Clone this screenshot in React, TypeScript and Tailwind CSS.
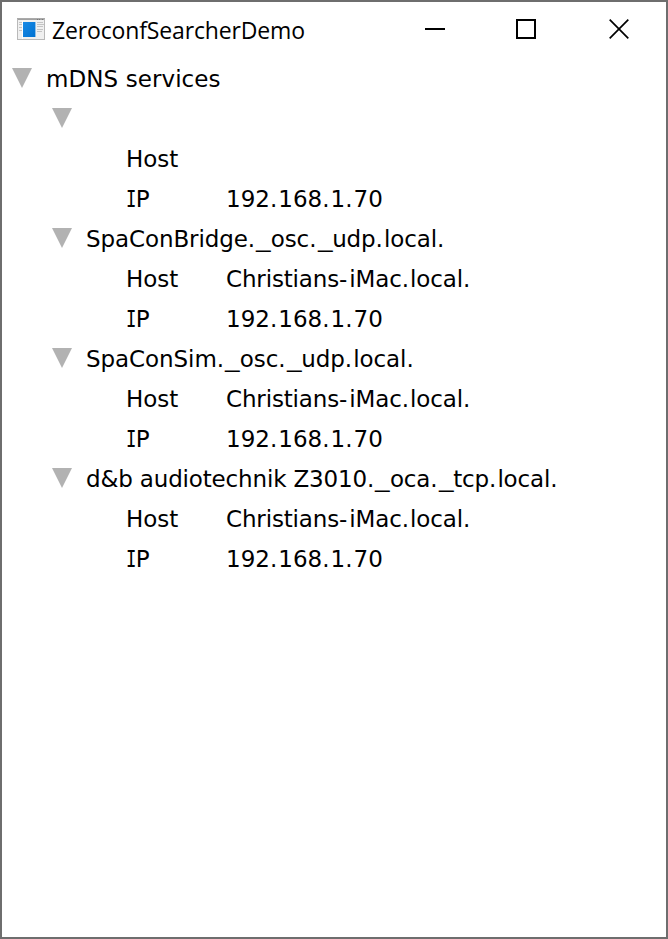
import React from "react";

type Service = { name: string; tracking: string; host: string; ip: string };

const services: Service[] = [
  { name: "", tracking: "", host: "", ip: "192.168.1.70" },
  { name: "SpaConBridge._osc._udp.local.", tracking: "tracking-[-0.1px]", host: "Christians-iMac.local.", ip: "192.168.1.70" },
  { name: "SpaConSim._osc._udp.local.", tracking: "tracking-[-0.07px]", host: "Christians-iMac.local.", ip: "192.168.1.70" },
  { name: "d&b audiotechnik Z3010._oca._tcp.local.", tracking: "tracking-[-0.16px]", host: "Christians-iMac.local.", ip: "192.168.1.70" },
];

function Arrow() {
  return (
    <svg className="mr-[14px] h-5 w-5 shrink-0" viewBox="0 0 20 20">
      <path d="M0 0H20L10 20Z" fill="#b2b2b2" />
    </svg>
  );
}

// Sets punctuation and the capital I on wider advances than the rest of the text.
function Label({ text, className }: { text: string; className: string }) {
  return (
    <span className={`relative top-px ${className}`}>
      {text.split(/([._I-])/).map((part, i) => {
        if (part === ".") return <span key={i} className="tracking-[1.06px]">.</span>;
        if (part === "-") return <span key={i} className="tracking-[2px]">-</span>;
        if (part === "_") return <span key={i} className="inline-block w-[14.6px] origin-left scale-x-127">_</span>;
        if (part === "I")
          return (
            <span key={i} className="inline-block w-[9.7px] origin-left scale-x-75 font-['DejaVu_Sans_Mono',monospace]">
              I
            </span>
          );
        return part;
      })}
    </span>
  );
}

function Detail({ label, value, tracking }: { label: string; value: string; tracking: string }) {
  return (
    <div className="flex h-10 items-center pl-[124px]">
      <Label text={label} className="w-[100px]" />
      <Label text={value} className={tracking} />
    </div>
  );
}

function WindowIcon() {
  return (
    <svg className="h-[22px] w-7 shrink-0" viewBox="0 0 28 22">
      <defs>
        <linearGradient id="pane" x1="0" y1="0" x2="1" y2="1">
          <stop offset="0" stopColor="#1889e4" />
          <stop offset="1" stopColor="#0072d2" />
        </linearGradient>
      </defs>
      <rect x=".5" y=".5" width="27" height="21" fill="#f0f0f0" stroke="#b9b9b9" />
      <path d="M0 .5H28" stroke="#aaa" />
      <path d="M1 1.5H27" stroke="#a0a0a0" />
      <path d="M20 1.5H21M22 1.5H23M25 1.5H26" stroke="#777" />
      <path d="M5.5 3V21" stroke="#fff" />
      <rect x="6" y="4" width="12.4" height="15" fill="url(#pane)" />
      <path d="M2 4.5H5M2 6.5H5M2 9.5H5M2 12.5H5" stroke="#c4c4c4" />
      <path d="M20 4.5H26M20 6.5H27M20 8.5H26M20 11.5H26M20 13.5H25" stroke="#c4c4c4" />
    </svg>
  );
}

export default function App() {
  return (
    <div className="flex h-[939px] w-[668px] flex-col overflow-hidden border-2 border-[#6e6e6e] bg-white text-black">
      <header className="mb-0.5 flex h-[54px] items-center pl-[15px]">
        <WindowIcon />
        <span className="ml-[7px] w-[373px] whitespace-nowrap pt-0.5 font-['Open_Sans',sans-serif] text-[23px] leading-[32px] tracking-[-0.15px]">
          ZeroconfSearcherDemo
        </span>
        <svg className="h-5 w-5 shrink-0" viewBox="0 0 20 20" shapeRendering="crispEdges">
          <path d="M0 10H20" stroke="#000" strokeWidth="2" />
        </svg>
        <svg className="ml-[71px] h-5 w-5 shrink-0" viewBox="0 0 20 20">
          <rect x="1" y="1" width="18" height="18" fill="none" stroke="#000" strokeWidth="2" />
        </svg>
        <svg className="ml-[73px] h-5 w-5 shrink-0" viewBox="0 0 20 20">
          <path d="M.7 .7L19.3 19.3M19.3 .7L.7 19.3" stroke="#000" strokeWidth="1.7" />
        </svg>
      </header>
      <main className="whitespace-nowrap font-['DejaVu_Sans',Verdana,sans-serif] text-[23px] leading-[40px]">
        <div className="flex h-10 items-center pl-[10px]">
          <Arrow />
          <Label text="mDNS services" className="tracking-[0.08px]" />
        </div>
        {services.map((service, i) => (
          <section key={i}>
            <div className="flex h-10 items-center pl-[50px]">
              <Arrow />
              <Label text={service.name} className={service.tracking} />
            </div>
            <Detail label="Host" value={service.host} tracking="tracking-[-0.15px]" />
            <Detail label="IP" value={service.ip} tracking="tracking-[0px]" />
          </section>
        ))}
      </main>
    </div>
  );
}
